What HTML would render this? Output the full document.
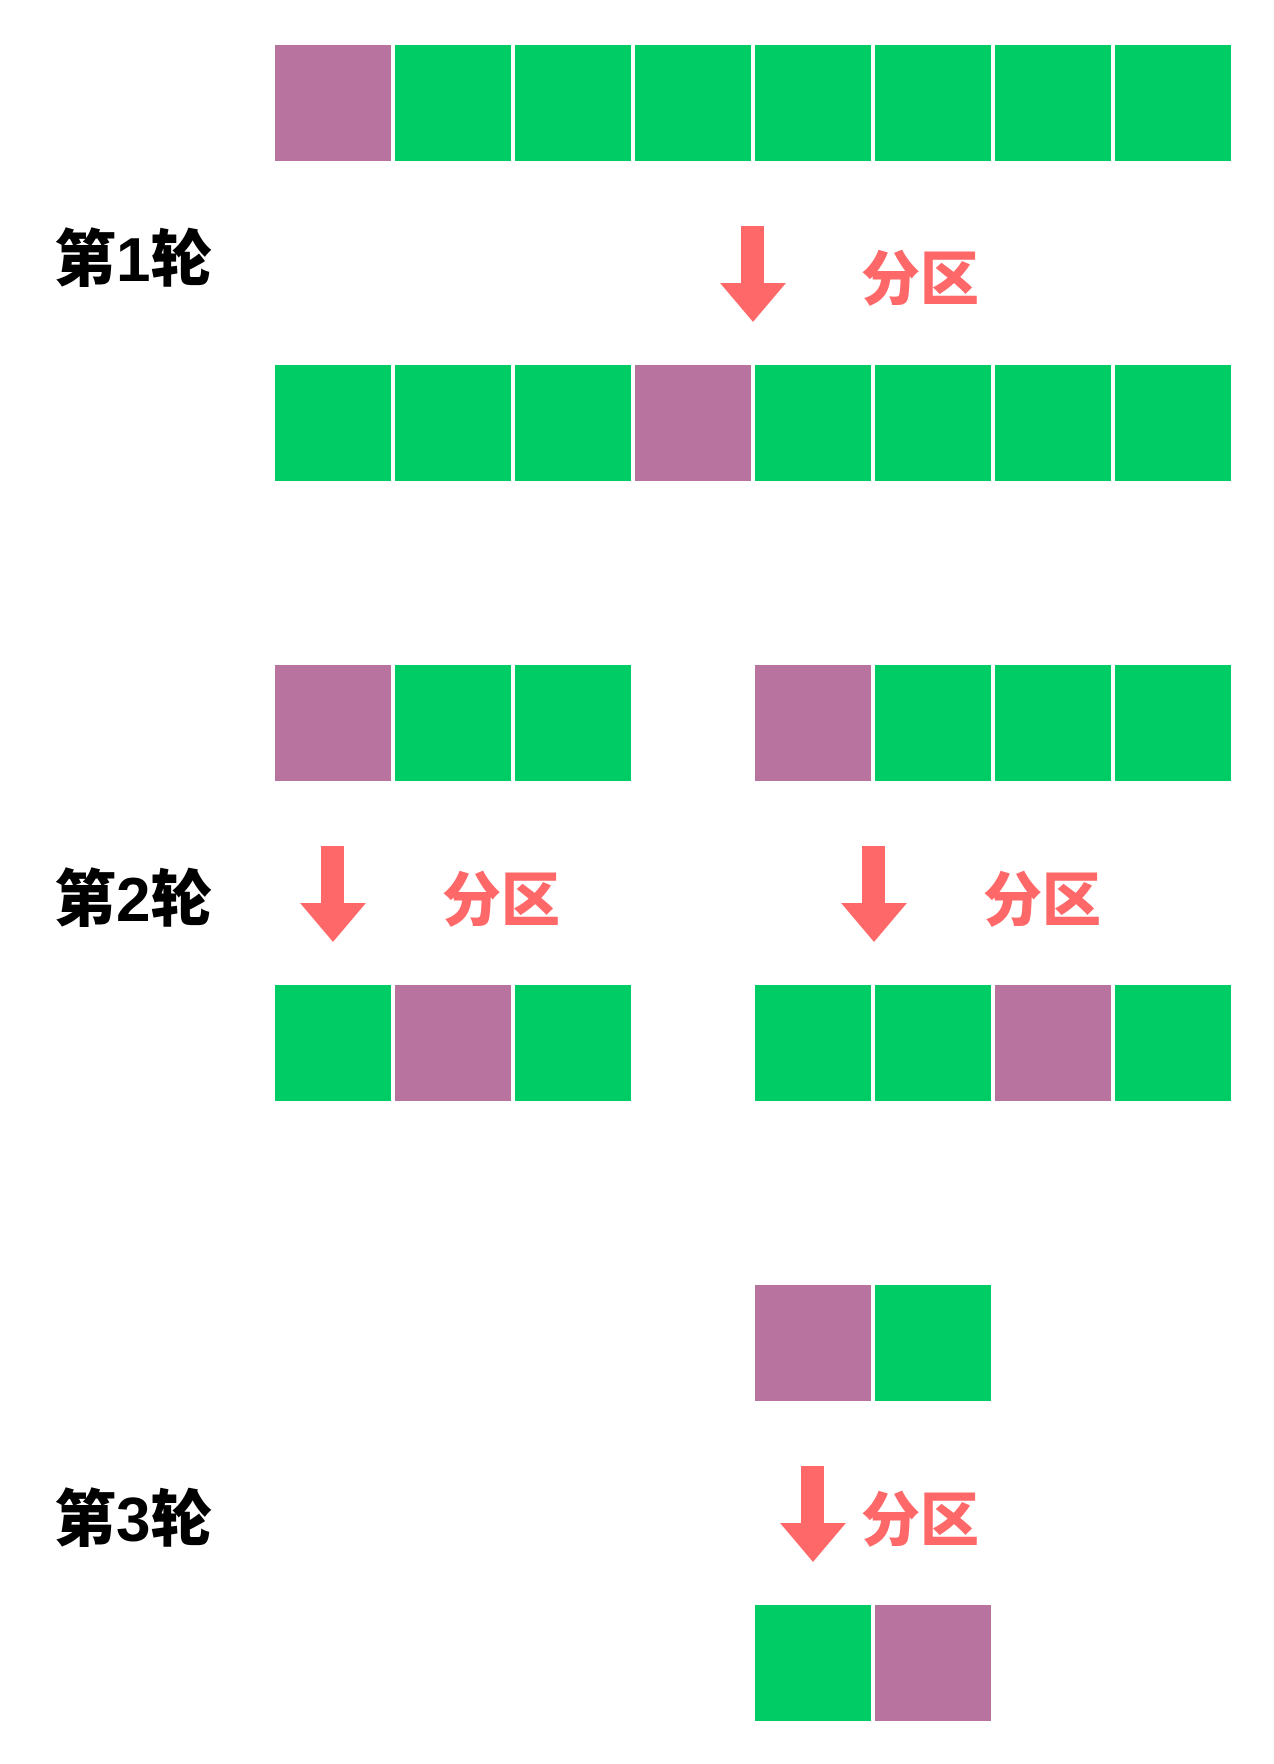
<!DOCTYPE html>
<html><head><meta charset="utf-8"><style>
body{margin:0;width:1274px;height:1764px;background:#fff;position:relative;overflow:hidden}
.c{position:absolute;width:116px;height:116px}
.g{background:#00cc66}.p{background:#b8749f}
.l{position:absolute;font:900 62px "Liberation Sans","Noto Sans CJK SC",sans-serif;color:#000;line-height:62px;white-space:nowrap}
.t{position:absolute;font:900 59px "Liberation Sans","Noto Sans CJK SC",sans-serif;color:#ff6868;line-height:60px;white-space:nowrap}
svg{position:absolute}
</style></head><body>
<div class="c p" style="left:275px;top:45px"></div>
<div class="c g" style="left:395px;top:45px"></div>
<div class="c g" style="left:515px;top:45px"></div>
<div class="c g" style="left:635px;top:45px"></div>
<div class="c g" style="left:755px;top:45px"></div>
<div class="c g" style="left:875px;top:45px"></div>
<div class="c g" style="left:995px;top:45px"></div>
<div class="c g" style="left:1115px;top:45px"></div>

<div class="c g" style="left:275px;top:365px"></div>
<div class="c g" style="left:395px;top:365px"></div>
<div class="c g" style="left:515px;top:365px"></div>
<div class="c p" style="left:635px;top:365px"></div>
<div class="c g" style="left:755px;top:365px"></div>
<div class="c g" style="left:875px;top:365px"></div>
<div class="c g" style="left:995px;top:365px"></div>
<div class="c g" style="left:1115px;top:365px"></div>

<div class="c p" style="left:275px;top:665px"></div>
<div class="c g" style="left:395px;top:665px"></div>
<div class="c g" style="left:515px;top:665px"></div>
<div class="c p" style="left:755px;top:665px"></div>
<div class="c g" style="left:875px;top:665px"></div>
<div class="c g" style="left:995px;top:665px"></div>
<div class="c g" style="left:1115px;top:665px"></div>

<div class="c g" style="left:275px;top:985px"></div>
<div class="c p" style="left:395px;top:985px"></div>
<div class="c g" style="left:515px;top:985px"></div>
<div class="c g" style="left:755px;top:985px"></div>
<div class="c g" style="left:875px;top:985px"></div>
<div class="c p" style="left:995px;top:985px"></div>
<div class="c g" style="left:1115px;top:985px"></div>

<div class="c p" style="left:755px;top:1285px"></div>
<div class="c g" style="left:875px;top:1285px"></div>

<div class="c g" style="left:755px;top:1605px"></div>
<div class="c p" style="left:875px;top:1605px"></div>

<div class="l" style="left:54px;top:230px">第1轮</div>
<div class="l" style="left:54px;top:870px">第2轮</div>
<div class="l" style="left:54px;top:1490px">第3轮</div>

<svg style="left:720px;top:226px" width="66" height="97"><path d="M21 0H44V57H66L33 96L0 57H21Z" fill="#ff6868"/></svg>
<div class="t" style="left:861px;top:250px">分区</div>

<svg style="left:300px;top:846px" width="66" height="97"><path d="M21 0H44V57H66L33 96L0 57H21Z" fill="#ff6868"/></svg>
<div class="t" style="left:442px;top:871px">分区</div>
<svg style="left:841px;top:846px" width="66" height="97"><path d="M21 0H44V57H66L33 96L0 57H21Z" fill="#ff6868"/></svg>
<div class="t" style="left:983px;top:871px">分区</div>

<svg style="left:780px;top:1466px" width="66" height="97"><path d="M21 0H44V57H66L33 96L0 57H21Z" fill="#ff6868"/></svg>
<div class="t" style="left:861px;top:1491px">分区</div>
</body></html>
